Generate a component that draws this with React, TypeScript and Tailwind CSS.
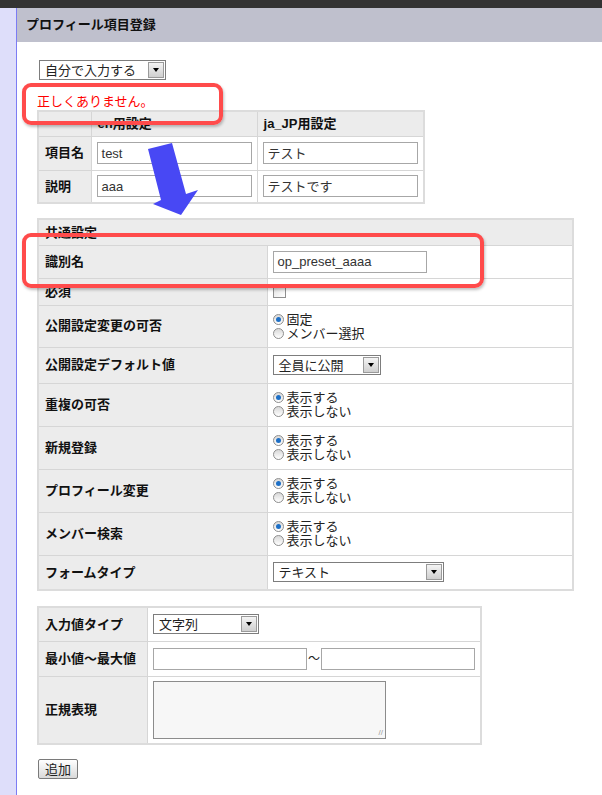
import React from 'react';

const font = "font-['Liberation_Sans','Noto_Sans_CJK_JP',sans-serif]";

function Select({ value, width }: { value: string; width: number }) {
    return (
        <div
            className="flex h-[20px] items-center justify-between border border-[#7d7d7d] bg-white pl-[5px] pr-[1px] text-[13px] leading-none text-[#222]"
            style={{ width }}
        >
            <span>{value}</span>
            <span className="flex h-[16px] w-[16px] items-center justify-center border border-[#9a9a9a] bg-gradient-to-b from-[#f4f4f4] to-[#cfcfcf]">
                <span className="h-0 w-0 border-x-[3.5px] border-t-[4px] border-x-transparent border-t-black" />
            </span>
        </div>
    );
}

function TextInput({ value, width }: { value?: string; width: number }) {
    return (
        <div
            className="flex h-[22px] items-center border border-[#a7a7a7] bg-white pl-[4px] text-[13px] leading-none text-[#333]"
            style={{ width }}
        >
            {value}
        </div>
    );
}

function Radio({ checked, label }: { checked?: boolean; label: string }) {
    return (
        <div className="flex h-[14px] items-center gap-[3px] text-[13px] leading-none text-[#222]">
            <span className="flex h-[11px] w-[11px] items-center justify-center rounded-full border border-[#8f8f8f] bg-gradient-to-b from-[#d8d8d8] to-white">
                {checked && <span className="h-[5px] w-[5px] rounded-full bg-[#1d6fc6]" />}
            </span>
            <span>{label}</span>
        </div>
    );
}

function RadioPair({ a, b }: { a: string; b: string }) {
    return (
        <div className="flex flex-col">
            <Radio checked label={a} />
            <Radio label={b} />
        </div>
    );
}

const rows: { label: string; h: number; value: React.ReactNode }[] = [
    { label: '識別名', h: 33, value: <TextInput value="op_preset_aaaa" width={154} /> },
    {
        label: '必須',
        h: 27,
        value: <span className="block h-[13px] w-[13px] border border-[#8f8f8f] bg-gradient-to-br from-[#e2e2e2] to-white" />,
    },
    { label: '公開設定変更の可否', h: 42, value: <RadioPair a="固定" b="メンバー選択" /> },
    { label: '公開設定デフォルト値', h: 36, value: <Select value="全員に公開" width={108} /> },
    { label: '重複の可否', h: 43, value: <RadioPair a="表示する" b="表示しない" /> },
    { label: '新規登録', h: 43, value: <RadioPair a="表示する" b="表示しない" /> },
    { label: 'プロフィール変更', h: 43, value: <RadioPair a="表示する" b="表示しない" /> },
    { label: 'メンバー検索', h: 43, value: <RadioPair a="表示する" b="表示しない" /> },
    { label: 'フォームタイプ', h: 35, value: <Select value="テキスト" width={171} /> },
];

const cell = 'border border-[#d6d6d6]';
const th = `${cell} bg-[#ececec] px-[6px] text-left align-middle font-bold text-[13px] text-[#111]`;
const td = `${cell} bg-white px-[5px] align-middle`;

export default function App() {
    return (
        <div className={`relative min-h-[795px] w-[602px] bg-white ${font} text-[13px] text-[#222]`}>
            <div className="h-[8px] bg-[#333333]" />
            <div className="flex min-h-[787px]">
                <div className="w-[17px] shrink-0 border-r border-[#7c7cf4] bg-[#dedefa]" />
                <div className="flex-1">
                    <div className="flex h-[34px] items-center bg-[#bfc0cd] pl-[9px] text-[13px] font-bold text-[#111]">
                        プロフィール項目登録
                    </div>

                    <div className="flex flex-col pl-[20px] pt-[18px]">
                        <div className="pl-[2px]">
                            <Select value="自分で入力する" width={127} />
                        </div>
                        <div className="mt-[14px] h-[15px] text-[13px] leading-[15px] text-[#ff0000]">
                            正しくありません。
                        </div>

                        {/* language table */}
                        <table className="mt-[1px] w-[388px] border-collapse border-2 border-[#dcdcdc]">
                            <tbody>
                                <tr className="h-[25px]">
                                    <th className={`${th} w-[55px]`} />
                                    <th className={`${th} w-[166px]`}>en用設定</th>
                                    <th className={`${th} w-[167px]`}>ja_JP用設定</th>
                                </tr>
                                <tr className="h-[34px]">
                                    <th className={th}>項目名</th>
                                    <td className={td}><TextInput value="test" width={155} /></td>
                                    <td className={td}><TextInput value="テスト" width={155} /></td>
                                </tr>
                                <tr className="h-[33px]">
                                    <th className={th}>説明</th>
                                    <td className={td}><TextInput value="aaa" width={155} /></td>
                                    <td className={td}><TextInput value="テストです" width={155} /></td>
                                </tr>
                            </tbody>
                        </table>

                        {/* common settings */}
                        <table className="mt-[14px] w-[537px] border-collapse border-2 border-[#dcdcdc]">
                            <tbody>
                                <tr className="h-[26px]">
                                    <th colSpan={2} className={th}>共通設定</th>
                                </tr>
                                {rows.map((r) => (
                                    <tr key={r.label} style={{ height: r.h }}>
                                        <th className={`${th} w-[229px]`}>{r.label}</th>
                                        <td className={td}>{r.value}</td>
                                    </tr>
                                ))}
                            </tbody>
                        </table>

                        {/* value settings */}
                        <table className="mt-[15px] w-[445px] border-collapse border-2 border-[#dcdcdc]">
                            <tbody>
                                <tr className="h-[34px]">
                                    <th className={`${th} w-[110px]`}>入力値タイプ</th>
                                    <td className={td}><Select value="文字列" width={106} /></td>
                                </tr>
                                <tr className="h-[35px]">
                                    <th className={th}>最小値〜最大値</th>
                                    <td className={td}>
                                        <div className="flex items-center">
                                            <TextInput width={154} />
                                            <span className="px-[1px] text-[12px]">〜</span>
                                            <TextInput width={154} />
                                        </div>
                                    </td>
                                </tr>
                                <tr className="h-[68px]">
                                    <th className={th}>正規表現</th>
                                    <td className={td}>
                                        <div className="relative h-[58px] w-[233px] border border-[#8c8c8c] bg-[#f7f7f7]">
                                            <span className="absolute bottom-[1px] right-[2px] text-[8px] leading-none text-[#999]">//</span>
                                        </div>
                                    </td>
                                </tr>
                            </tbody>
                        </table>

                        <div className="mt-[14px] pl-[1px] pb-[14px]">
                            <button className="flex h-[20px] w-[40px] items-center justify-center rounded-[2px] border border-[#7a7a7a] bg-gradient-to-b from-white to-[#d9d9d9] text-[13px] leading-none text-[#222]">
                                追加
                            </button>
                        </div>
                    </div>
                </div>
            </div>

            {/* annotations */}
            <div className="pointer-events-none absolute left-[22px] top-[83px] h-[42px] w-[201px] rounded-[9px] border-4 border-[#ff4b4b] shadow-[1px_2px_3px_rgba(0,0,0,0.25)]" />
            <div className="pointer-events-none absolute left-[22px] top-[233px] h-[55px] w-[462px] rounded-[9px] border-4 border-[#ff4b4b] shadow-[1px_2px_3px_rgba(0,0,0,0.25)]" />
            <svg className="pointer-events-none absolute left-0 top-0" width="602" height="795">
                <polygon
                    points="148,149 172,143 186,194 198,190 181,215 153,204 161,200"
                    fill="#4848f4"
                />
            </svg>
        </div>
    );
}
